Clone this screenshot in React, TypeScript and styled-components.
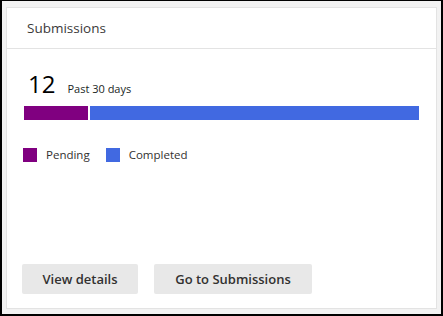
import React from "react";
import styled, {createGlobalStyle} from "styled-components";

const GlobalStyle = createGlobalStyle`
    html, body {
        margin: 0;
        padding: 0;
        background: #ffffff;
    }
    * {
        box-sizing: border-box;
    }
`;

const Frame = styled.div`
    width: 443px;
    height: 316px;
    border: 2px solid #000000;
    border-top-width: 1px;
    background: #f2f2f2;
    padding: 6px 4px 5px 4px;
    font-family: "Open Sans", "Noto Sans", sans-serif;
    color: #323130;
`;

const Card = styled.div`
    height: 100%;
    background: #ffffff;
    border: 1px solid #e3e3e3;
    display: flex;
    flex-direction: column;
`;

const Header = styled.div`
    height: 41px;
    display: flex;
    align-items: center;
    padding-left: 20px;
    border-bottom: 1px solid #e3e3e3;
    font-size: 13.5px;
    font-weight: 500;
    color: #3b3a39;
`;

const Body = styled.div`
    flex: 1;
    display: flex;
    flex-direction: column;
    padding: 20px 16px 14px 16px;
`;

const CountRow = styled.div`
    display: flex;
    align-items: baseline;
    gap: 12px;
    padding-left: 5px;
    height: 37px;
`;

const Count = styled.span`
    font-size: 24px;
    font-weight: 500;
    line-height: 30px;
    color: #000000;
`;

const Period = styled.span`
    font-size: 11px;
    color: #201f1e;
`;

const Bar = styled.div`
    display: flex;
    gap: 2px;
    height: 14px;
    margin: 0 1px 0 1px;
`;

const Segment = styled.div<{ $color: string; $grow: number }>`
    flex: ${p => p.$grow};
    background: ${p => p.$color};
`;

const Legend = styled.div`
    display: flex;
    align-items: center;
    gap: 16px;
    margin-top: 27px;
`;

const LegendItem = styled.div`
    display: flex;
    align-items: center;
    gap: 9px;
    font-size: 11.5px;
    color: #323130;
`;

const Swatch = styled.span<{ $color: string }>`
    width: 14px;
    height: 14px;
    background: ${p => p.$color};
`;

const Actions = styled.div`
    margin-top: auto;
    margin-left: -1px;
    display: flex;
    gap: 16px;
`;

const Button = styled.button<{ $width: number }>`
    width: ${p => p.$width}px;
    height: 30px;
    border: none;
    border-radius: 2px;
    background: #e8e8e8;
    font-family: inherit;
    font-size: 13px;
    font-weight: 600;
    color: #323130;
    padding: 0;
`;

const segments = [
    {label: "Pending", color: "#800080", value: 2},
    {label: "Completed", color: "#4169e1", value: 10.3},
];

const App = () => {
    const total = 12;

    return (
        <>
            <GlobalStyle/>
            <Frame>
                <Card>
                    <Header>Submissions</Header>
                    <Body>
                        <CountRow>
                            <Count>{total}</Count>
                            <Period>Past 30 days</Period>
                        </CountRow>
                        <Bar>
                            {segments.map(s => (
                                <Segment key={s.label} $color={s.color} $grow={s.value}/>
                            ))}
                        </Bar>
                        <Legend>
                            {segments.map(s => (
                                <LegendItem key={s.label}>
                                    <Swatch $color={s.color}/>
                                    {s.label}
                                </LegendItem>
                            ))}
                        </Legend>
                        <Actions>
                            <Button $width={116}>View details</Button>
                            <Button $width={158}>Go to Submissions</Button>
                        </Actions>
                    </Body>
                </Card>
            </Frame>
        </>
    )
}

export default App
